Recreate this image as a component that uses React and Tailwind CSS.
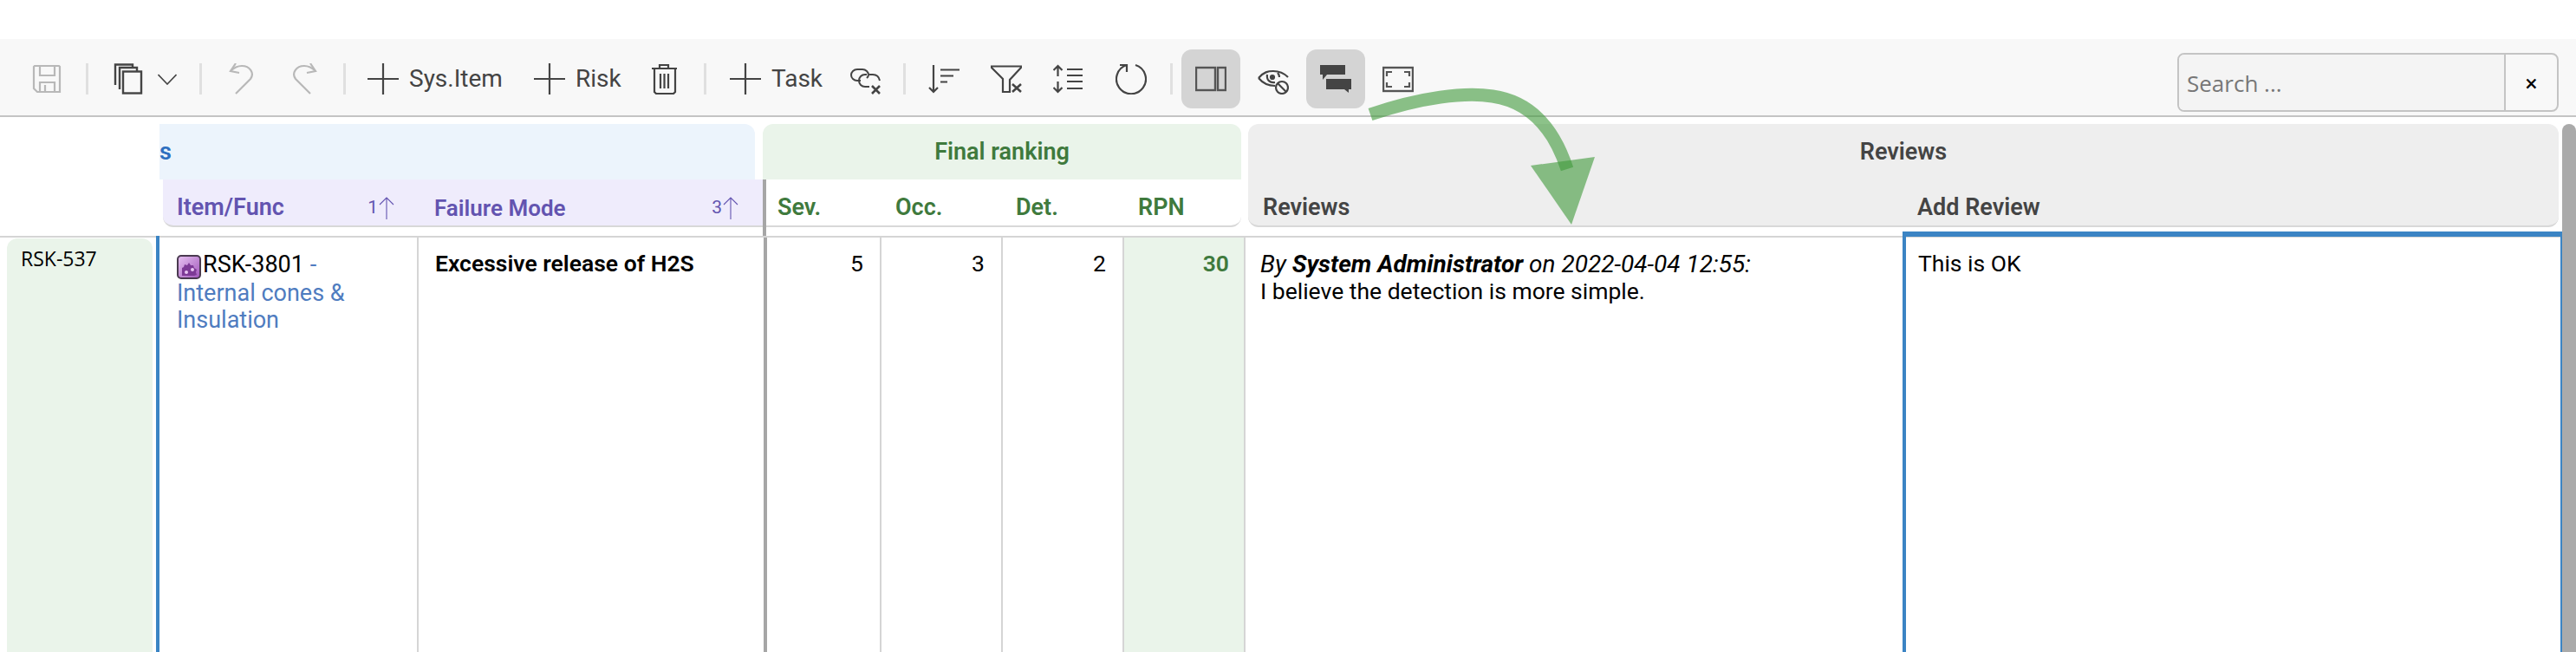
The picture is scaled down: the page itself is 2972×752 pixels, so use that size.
import React from "react";

const plex = { fontFamily: "Roboto, sans-serif" };

function Icon({ children, className = "", w = 36, h = 36 }) {
  return (
    <svg
      width={w}
      height={h}
      viewBox={`0 0 ${w} ${h}`}
      fill="none"
      stroke="currentColor"
      strokeWidth="2.2"
      className={className}
    >
      {children}
    </svg>
  );
}

function Sep({ className = "" }) {
  return (
    <div className={`flex h-[68px] items-center justify-center ${className}`}>
      <div className="h-[36px] w-[3px] bg-[#e0e0e0]" />
    </div>
  );
}

function Plus() {
  return (
    <Icon>
      <path d="M18 0V36M0 18H36" />
    </Icon>
  );
}

function ToolBtn({ children, active, className = "w-[68px]" }) {
  return (
    <div
      className={`flex h-[68px] shrink-0 items-center justify-center rounded-xl ${className} ${
        active ? "bg-[#d4d4d4]" : ""
      }`}
    >
      {children}
    </div>
  );
}

function TextBtn({ label, className }) {
  return (
    <div className={`flex h-[68px] shrink-0 items-center gap-3 pl-4 text-[28px] text-[#444] ${className}`}>
      <Plus />
      <span>{label}</span>
    </div>
  );
}

function Toolbar() {
  return (
    <div className="flex h-[90px] items-center border-b-2 border-[#c4c4c4] bg-[#f8f8f8] pt-1 pl-5 text-[#444]">
      <ToolBtn>
        <Icon className="text-[#b8b8b8]">
          <path d="M4 3H32L33 4V33H7L3 29V4Z" />
          <path d="M10 3V14H27V3M10 33V22H27V33M16 25V33" />
        </Icon>
      </ToolBtn>
      <Sep className="w-6" />
      <div className="flex h-[68px] w-[107px] shrink-0 items-center gap-4 pl-[18px]">
        <Icon>
          <rect x="12" y="9.5" width="21" height="25" strokeWidth="2.4" />
          <path d="M8 30V5H28V9M3 25V1.5H23V5" strokeWidth="2.4" />
        </Icon>
        <svg width="22" height="13" viewBox="0 0 22 13" fill="none" stroke="currentColor" strokeWidth="1.6">
          <path d="M0.5 1L11 12L21.5 1" />
        </svg>
      </div>
      <Sep className="w-6" />
      <ToolBtn className="ml-[2px] w-[68px]">
        <Icon className="text-[#b8b8b8]">
          <path d="M11 35L28 18C33 11 27 3 18 3C13 3 9 5 5 9" />
          <path d="M11 0L5 9L15 11" />
        </Icon>
      </ToolBtn>
      <ToolBtn className="ml-1 w-[68px]">
        <Icon className="text-[#b8b8b8]">
          <path d="M25 35L8 18C3 11 9 3 18 3C23 3 27 5 31 9" />
          <path d="M25 0L31 9L21 11" />
        </Icon>
      </ToolBtn>
      <Sep className="w-6" />
      <TextBtn label="Sys.Item" className="w-[192px] -ml-px" />
      <TextBtn label="Risk" className="w-[132px]" />
      <ToolBtn>
        <Icon>
          <path d="M4 6H33M13 6V2H23V6" />
          <path d="M7 6V33L9 35H29L31 33V6" />
          <path d="M14 12V29M18.5 12V29M23 12V29" />
        </Icon>
      </ToolBtn>
      <Sep className="w-[26px]" />
      <TextBtn label="Task" className="w-[138px]" />
      <ToolBtn>
        <Icon>
          <path d="M13 20H9C5 20 2 17 2 13.5C2 10 5 7 9 7H15C19 7 22 10 22 13.5C22 15 21 16 20 17" strokeWidth="2" />
          <path d="M20 13H18C14 13 11 16 11 20C11 24 14 27 18 27H23M23 13H27C31 13 34 15 35 20" strokeWidth="2" />
          <path d="M26 26L35 35M35 26L26 35" strokeWidth="2.6" />
        </Icon>
      </ToolBtn>
      <Sep className="w-[23px]" />
      <ToolBtn>
        <Icon>
          <path d="M6 2V33M1 28L6 33L11 28M14 7.5H36M14 14.5H29M14 21.5H22" />
        </Icon>
      </ToolBtn>
      <ToolBtn className="ml-1 w-[68px]">
        <Icon>
          <path d="M1 3.5H35V5L22 19V33H14V18L1 5Z" />
          <path d="M25 24L35 33M35 24L25 33" strokeWidth="2.6" />
        </Icon>
      </ToolBtn>
      <ToolBtn className="ml-1 w-[68px]">
        <Icon>
          <path d="M5.5 3V15M0.5 8L5.5 3L10.5 8M5.5 21V33M0.5 28L5.5 33L10.5 28M16 7H34M16 14H34M16 21H34M16 29H34" />
        </Icon>
      </ToolBtn>
      <ToolBtn className="ml-1 w-[68px]">
        <Icon>
          <path d="M23 2A17 17 0 1 1 13 2" />
          <path d="M5 2H13V10" />
        </Icon>
      </ToolBtn>
      <Sep className="w-6" />
      <ToolBtn active>
        <Icon className="text-[#555]">
          <rect x="1" y="5" width="22" height="26" strokeWidth="2.4" />
          <rect x="26" y="5" width="9" height="26" strokeWidth="2.4" />
        </Icon>
      </ToolBtn>
      <ToolBtn className="ml-1 w-[68px]">
        <Icon>
          <path d="M1 17C7 10 12 9 18 9C25 9 31 12 35 16M1 17C6 23 12 26 20 26" />
          <path d="M11 13C10 19 14 23 20 22M23 11C24 12 25 14 25 16" />
          <circle cx="17" cy="16" r="2" fill="currentColor" />
          <circle cx="28" cy="28" r="7" />
          <path d="M23 23L33 33" />
        </Icon>
      </ToolBtn>
      <ToolBtn active className="ml-1 w-[68px]">
        <svg width="36" height="36" viewBox="0 0 36 36" fill="#444">
          <path d="M0 2H29V13H8L3 19V13H0Z" />
          <path d="M7 18H36V30H33V34L28 30H7Z" />
        </svg>
      </ToolBtn>
      <ToolBtn className="ml-1 w-[68px]">
        <Icon className="text-[#555]">
          <rect x="1" y="5" width="34" height="27" strokeWidth="2.4" />
          <path d="M5 15V10H11M25 10H31V15M5 22V27H11M25 27H31V22" />
        </Icon>
      </ToolBtn>
      <div className="mt-2 mr-5 ml-auto flex h-[68px] w-[440px] overflow-hidden rounded-lg border-2 border-[#c4c4c4]">
        <div
          className="flex flex-1 items-center bg-[#f4f4f4] pt-[2px] pl-[9px] text-[26px] text-[#777]"
          style={{ fontFamily: "'Open Sans', sans-serif" }}
        >
          Search ...
        </div>
        <div className="flex w-[61px] items-center justify-center border-l-2 border-[#c4c4c4] pt-[2px] text-[26px] text-black">
          ×
        </div>
      </div>
    </div>
  );
}

function SortArrow({ n }) {
  return (
    <span className="flex items-center gap-px text-[21px] font-normal">
      {n}
      <svg width="18" height="26" viewBox="0 0 18 26" fill="none" stroke="currentColor" strokeWidth="1.1">
        <path d="M9 26V1M1 9L9 1L17 9" />
      </svg>
    </span>
  );
}

function Header() {
  return (
    <div className="flex h-[129px] text-[27px] font-semibold leading-none">
      <div className="w-[184px] shrink-0" />
      <div className="h-[119px] w-[696px] shrink-0">
        <div className="flex h-16 w-[687px] items-center rounded-tr-xl bg-[#ecf4fc] text-[#2e6fc0]">s</div>
        <div className="ml-1 flex h-[55px] rounded-bl-xl border-b-2 border-[#d8d8d8] bg-[#efecfc] pt-[12px] text-[#6354b0]">
          <div className="flex w-[297px] items-center justify-between pr-[30px] pl-4">
            Item/Func
            <SortArrow n="1" />
          </div>
          <div className="flex flex-1 items-center justify-between pr-[28px] pl-[16px] text-[26px]">
            Failure Mode
            <SortArrow n="3" />
          </div>
        </div>
      </div>
      <div className="mr-2 w-[552px] shrink-0 text-[#3f7a3d]">
        <div className="flex h-16 items-center justify-center rounded-t-xl bg-[#eaf4ea]">Final ranking</div>
        <div className="h-[65px] border-l-4 border-[#a6a6a6]">
          <div className="flex h-[55px] items-center rounded-br-xl border-b-2 border-[#d8d8d8] bg-white pt-[12px]">
            <div className="w-[136px] pl-[13px]">Sev.</div>
            <div className="w-[139px] pl-[13px]">Occ.</div>
            <div className="w-[141px] pl-[13px]">Det.</div>
            <div className="pl-[13px]">RPN</div>
          </div>
        </div>
      </div>
      <div className="flex h-[119px] w-[1512px] shrink-0 flex-col rounded-xl border-b-2 border-[#d8d8d8] bg-[#eeeeee] text-[#444]">
        <div className="flex h-16 items-center justify-center">Reviews</div>
        <div className="flex flex-1 items-center pt-[12px]">
          <div className="w-[772px] pl-[17px]">Reviews</div>
          <div>Add Review</div>
        </div>
      </div>
    </div>
  );
}

function ItemIcon() {
  return (
    <svg width="28" height="28" viewBox="0 0 28 28" className="mr-[2px] inline-block align-[-8px]">
      <defs>
        <linearGradient id="itemBg" x1="0" y1="0" x2="1" y2="1">
          <stop offset="0" stopColor="#e8c4f2" />
          <stop offset="1" stopColor="#a055bb" />
        </linearGradient>
      </defs>
      <rect x="1" y="1" width="26" height="26" rx="4" fill="url(#itemBg)" stroke="#4a3a50" strokeWidth="2" />
      <path d="M6 15l2-1 1-3 3 1 2-3 2 3 3 0 1 3 3 2-1 3 1 3-3 1H6z" fill="#7d3a96" />
      <circle cx="11" cy="20" r="2" fill="#e8c4f2" />
      <circle cx="18" cy="17" r="2" fill="#e8c4f2" />
    </svg>
  );
}

function Body() {
  return (
    <div className="flex h-[480px] border-t-2 border-[#d5d5d5] text-[26.5px] leading-[31px] text-black">
      <div
        className="mt-[1px] mr-1 ml-2 w-[168px] shrink-0 rounded-t-xl bg-[#eaf4ea] pt-[8px] pl-4 text-[23px]"
        style={{ fontFamily: "'Open Sans', sans-serif" }}
      >
        RSK-537
      </div>
      <div className="-mt-[2px] w-[303px] shrink-0 border-r-2 border-l-4 border-r-[#d5d5d5] border-l-[#3b84c4] pt-[18px] pr-3 pl-5 text-[27px]">
        <div>
          <ItemIcon />
          RSK-3801 <span className="text-[#4f7cc0]">-</span>
        </div>
        <div className="mt-[1px] text-[#4f7cc0]">Internal cones &amp; Insulation</div>
      </div>
      <div className="w-[402px] shrink-0 border-r-4 border-[#a6a6a6] pt-[14px] pl-[19px] font-semibold">
        Excessive release of H2S
      </div>
      <div className="w-[132px] shrink-0 border-r-2 border-[#d5d5d5] pt-[14px] pr-[19px] text-right">5</div>
      <div className="w-[140px] shrink-0 border-r-2 border-[#d5d5d5] pt-[14px] pr-[19px] text-right">3</div>
      <div className="w-[140px] shrink-0 border-r-2 border-[#d5d5d5] pt-[14px] pr-[19px] text-right">2</div>
      <div className="w-[140px] shrink-0 border-r-2 border-[#d5d5d5] bg-[#eaf4ea] pt-[14px] pr-[17px] text-right font-semibold text-[#3f7a3d]">
        30
      </div>
      <div className="w-[758px] shrink-0 pt-[15px] pl-[17px]">
        <div className="text-[28px] italic">
          By <b>System Administrator</b> on 2022-04-04 12:55:
        </div>
        <div>I believe the detection is more simple.</div>
      </div>
      <div className="-mt-[7px] flex-1 border-t-[6px] border-r-2 border-l-4 border-[#3b84c4] pt-[15px] pl-[14px]">
        This is OK
      </div>
    </div>
  );
}

export default function App() {
  return (
    <div className="relative h-[752px] w-[2972px] overflow-hidden bg-white" style={plex}>
      <div className="h-[45px]" />
      <Toolbar />
      <div className="flex pt-2">
        <div className="w-[2956px] shrink-0">
          <Header />
          <Body />
        </div>
        <div className="flex-1 rounded-t-lg bg-[#aaaaaa]" />
      </div>
      {/* green annotation arrow drawn over the screenshot */}
      <svg className="pointer-events-none absolute inset-0" width="2972" height="752" viewBox="0 0 2972 752">
        <path
          d="M1581 132C1640 112 1690 106 1722 111C1770 118 1795 155 1808 195"
          fill="none"
          stroke="#3f9a3a"
          strokeOpacity="0.6"
          strokeWidth="15"
        />
        <path d="M1766 191L1840 181L1813 259Z" fill="#3f9a3a" fillOpacity="0.6" />
      </svg>
    </div>
  );
}
